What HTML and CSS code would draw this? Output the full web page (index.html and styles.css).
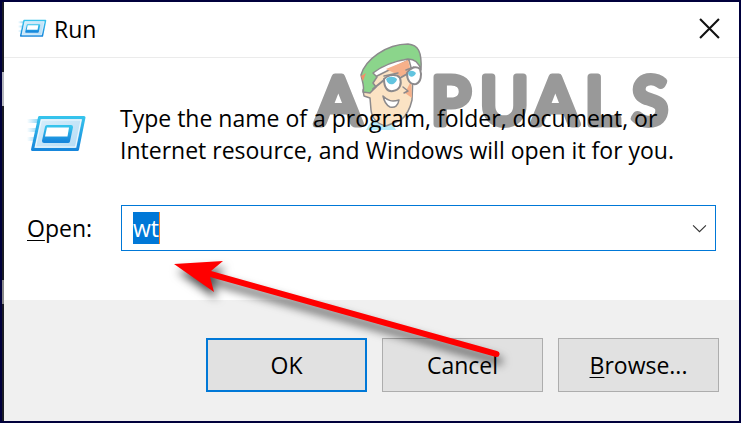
FILE: index.html
```html
<!DOCTYPE html>
<html lang="en">
<head>
<meta charset="UTF-8">
<title>Run</title>
<link rel="stylesheet" href="styles.css">
</head>
<body>

<!-- the Run symbol, used in the title bar and beside the text -->
<svg class="defs" aria-hidden="true">
  <defs>
    <linearGradient id="edge" x1="0" y1="0" x2="0" y2="1">
      <stop offset="0" stop-color="#35c3ec"/>
      <stop offset="1" stop-color="#1787dc"/>
    </linearGradient>
    <linearGradient id="face" x1="0" y1="0" x2="1" y2="1">
      <stop offset="0" stop-color="#d9effb"/>
      <stop offset="1" stop-color="#b3dbf5"/>
    </linearGradient>
    <linearGradient id="trail" x1="0" y1="0" x2="1" y2="0">
      <stop offset="0" stop-color="#5cc0ee" stop-opacity="0"/>
      <stop offset="1" stop-color="#5cc0ee" stop-opacity="0.7"/>
    </linearGradient>
    <symbol id="run" viewBox="0 0 60 38">
      <path fill="url(#trail)" d="M0 4h12l-1 4H0zM0 13h9l-1 4H0zM0 22h7l-1 4H0z"/>
      <path fill="url(#face)" stroke="url(#edge)" stroke-width="3" stroke-linejoin="round" d="M12.500 2.500h44.500l-6.500 32H5.500z"/>
      <path fill="none" stroke="#eef9ff" stroke-width="1" d="M14.500 5h39.500l-5.500 27H8.500z"/>
      <path fill="url(#edge)" stroke="url(#edge)" stroke-width="4" stroke-linejoin="round" d="M20 12h24l-3 14H17z"/>
      <path fill="#fff" d="M20 12.500h22l-1.500 9H18z"/>
    </symbol>
  </defs>
</svg>

<form class="dialog">
  <div class="titlebar">
    <svg class="icon-small" aria-hidden="true"><use href="#run"/></svg>
    <h1>Run</h1>
    <button type="button" class="close" aria-label="Close">
      <svg viewBox="0 0 20 20"><path d="M1 1l18 18M19 1L1 19"/></svg>
    </button>
  </div>

  <div class="content">
    <div class="intro">
      <svg class="icon-large" aria-hidden="true"><use href="#run"/></svg>
      <p>Type the name of a program, folder, document, or Internet resource, and Windows will open it for you.</p>
    </div>
    <div class="field">
      <label for="command"><u>O</u>pen:</label>
      <div class="combo">
        <input type="text" id="command" value="wt" autocomplete="off" spellcheck="false">
        <button type="button" aria-label="Show history">
          <svg viewBox="0 0 14 8"><path d="M1 1l6 6 6-6"/></svg>
        </button>
      </div>
    </div>
  </div>

  <div class="actions">
    <button type="submit" class="default">OK</button>
    <button type="button">Cancel</button>
    <button type="button"><u>B</u>rowse...</button>
  </div>

  <!-- logo behind the text -->
  <svg class="watermark" viewBox="0 0 370 100" role="img" aria-label="Appuals">
    <g class="letters">
      <text x="12" y="88">A</text>
      <text x="127" y="88">P</text>
      <text x="176" y="88">U</text>
      <text x="229" y="88">A</text>
      <text x="281" y="88">L</text>
      <text x="328" y="88">S</text>
    </g>
    <g class="mascot">
      <path fill="#b9ecfa" stroke="none" d="M62 94l6-10h18l6 10z"/>
      <path fill="#fbe3c4" d="M59 54l10-12 36-18 4 15-1 25c-2 9-5 15-11 20l-15 6c-8-2-14-7-15-16l-1-12-6-2z"/>
      <path fill="#f6b08a" stroke="none" d="M82 33l22-9 3 13-9 4-8-4z"/>
      <path fill="#f6b08a" stroke="none" d="M107 45l1 17-7-5z"/>
      <path fill="#8bd58b" d="M57 39C61 24 82 8 104 8c10 1 14 7 13 26-2-7-6-11-13-11-13 2-25 6-35 14l4 4-4 6 3 4-6 6-7-1c2-5-1-11-2-17z"/>
      <path fill="#f1906a" stroke="none" d="M57 40l5-3-3 8z"/>
      <path fill="#fff" stroke-width="2" d="M80 43c5-5 13-5 16-1 2 6 0 12-7 13-6 1-9-4-9-12zM103 37c4-6 9-7 13-4 2 6 1 13-4 15-6 1-9-4-9-11z"/>
      <path fill="none" stroke-width="2" d="M69 53l11-9M96 42l7-4"/>
      <path fill="#62c4df" stroke="none" d="M82 43c3-3 8-3 11 0-1 6-9 8-11 0zM104 37c2-3 5-3 8 0-2 5-7 5-8 0z"/>
      <path fill="none" d="M80 40l14-3M102 34l8-3M99 51l5 4-4 2"/>
      <path fill="#fff" d="M79 60c5 5 9 6 16 4-1 6-4 8-9 7-4-2-6-6-7-11z"/>
    </g>
  </svg>

  <svg class="arrow" viewBox="0 0 345 115" aria-hidden="true">
    <path d="M5 9l49-3-12 10 286 80a2.500 2.500 0 0 1-1 6L41 22l4 15z"/>
  </svg>
</form>

<script>
  document.getElementById("command").select();
</script>
</body>
</html>
```

FILE: styles.css
```css
* { box-sizing: border-box; }

body {
  margin: 0;
  background: #00003c;
  color: #000;
  font: 23px/32px "Open Sans", "Segoe UI", sans-serif;
}

.defs { position: absolute; width: 0; height: 0; }

.dialog {
  position: relative;
  display: flex;
  flex-direction: column;
  min-height: 100vh;
  border: 2px solid #00003c;
  padding-left: 2px;
  /* sliver of the window behind */
  background: linear-gradient(#1a1c24 70px, #b4b6bc 70px, #b4b6bc 104px, #1a1c24 104px, #1a1c24 278px, #888 278px, #888 302px, #1a1c24 302px);
}

button, input { font: inherit; color: inherit; }
u { text-underline-offset: 3px; text-decoration-thickness: 1px; }

.titlebar {
  display: flex;
  align-items: center;
  gap: 7px;
  height: 56px;
  padding: 0 19px 2px 14px;
  background: #fff;
  border-bottom: 1px solid #ebebeb;
}
.titlebar h1 { flex: 1; margin: 0; font-size: 23px; font-weight: normal; }
.icon-small { width: 29px; height: 19px; }

.close {
  display: flex;
  padding: 0;
  border: 0;
  background: none;
}
.close svg { width: 21px; height: 21px; }
.close path, .combo path { fill: none; stroke: #111; stroke-width: 2; }

.content {
  flex: 1;
  padding: 44px 23px 48px;
  background: #fff;
}
.intro { display: flex; align-items: center; gap: 33px; }
.intro p { position: relative; z-index: 1; flex: 1; margin: 0; }
.icon-large { flex: none; width: 60px; height: 38px; }

.field { display: flex; align-items: center; margin-top: 39px; }
.field label { width: 94px; }
.combo {
  display: flex;
  flex: 1;
  height: 46px;
  border: 1px solid #0078d7;
}
.combo input {
  flex: 1;
  min-width: 0;
  padding: 0 11px;
  border: 0;
  outline: 0;
  background: linear-gradient(#ff8728, #ff8728) 37px center / 1px 32px no-repeat #fff;
}
.combo input::selection { background: #0078d7; color: #fff; }
.combo button { padding: 0 8px; border: 0; background: none; }
.combo svg { display: block; width: 15px; height: 9px; }
.combo path { stroke: #333; stroke-width: 1; }

.actions {
  display: flex;
  justify-content: flex-end;
  gap: 15px;
  padding: 38px 20px 29px;
  background: #f0f0f0;
}
.actions button {
  width: 161px;
  height: 54px;
  padding: 0;
  border: 1px solid #adadad;
  background: #e1e1e1;
}
.actions .default { border: 2px solid #0078d7; }

.watermark {
  position: absolute;
  top: 34px;
  left: 302px;
  width: 370px;
  height: 100px;
  overflow: visible;
  pointer-events: none;
}
.letters {
  font: 66px "Lato", sans-serif;
  fill: #999;
  stroke: #999;
  stroke-width: 7px;
  stroke-linejoin: round;
}
.mascot {
  stroke: #8c8a8c;
  stroke-width: 1.500px;
  stroke-linejoin: round;
  stroke-linecap: round;
}

.arrow {
  position: absolute;
  z-index: 2;
  top: 253px;
  left: 167px;
  width: 345px;
  height: 115px;
  overflow: visible;
  fill: #f00;
  filter: drop-shadow(3px 7px 5px rgba(0, 0, 0, 0.7));
  pointer-events: none;
}
```
